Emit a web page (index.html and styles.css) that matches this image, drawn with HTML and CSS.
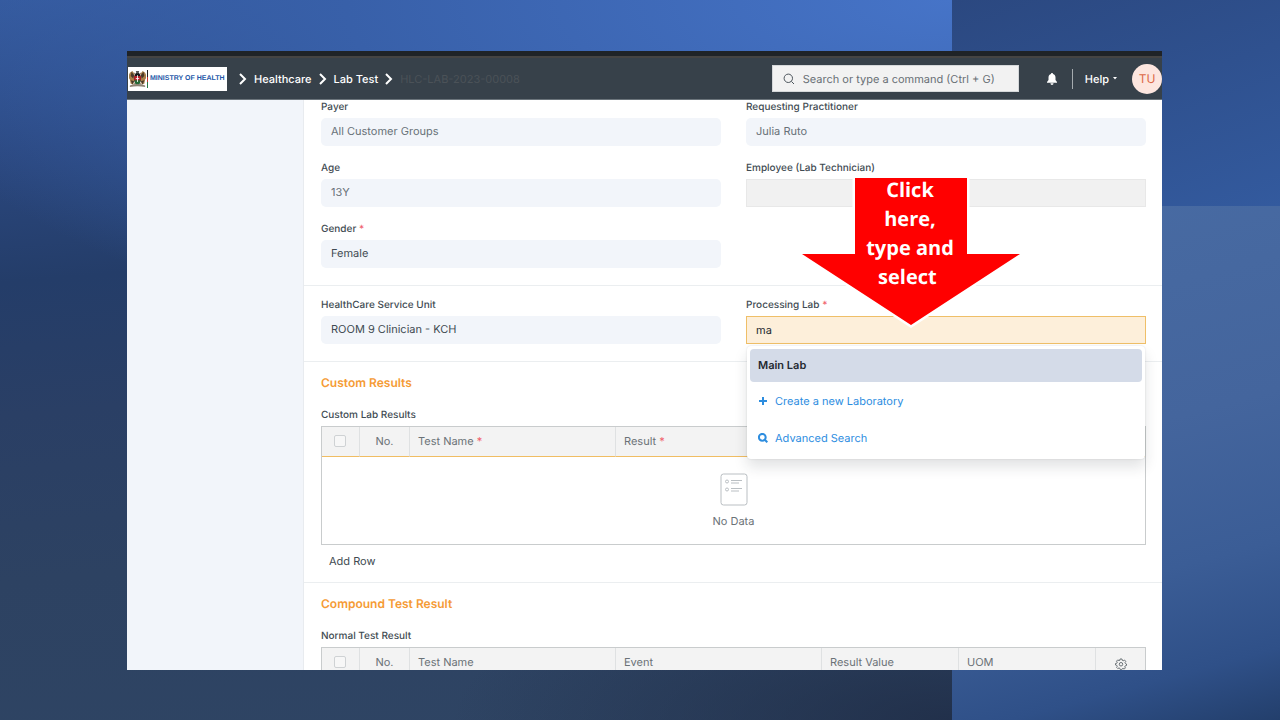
FILE: index.html
```
<!DOCTYPE html>
<html lang="en">
<head>
<meta charset="utf-8">
<title>Lab Test</title>
<link rel="stylesheet" href="styles.css">
</head>
<body>
<div class="slide">
  <div class="backdrop"><div class="tile-top"></div><div class="tile-bottom"></div></div>
  <div class="app">
    <div class="browser-edge"></div>
    <header class="navbar">
      <a class="brand" href="#">
        <svg class="crest" viewBox="2 2 20 21" aria-hidden="true">
          <path d="M3 5l3-2 2 3 1 5-2 8-3-1-1-5-2-3zM21 5l-3-2-2 3-1 5 2 8 3-1 1-5 2-3z" fill="#a8804a"/>
          <path d="M5 4l3 4-1 4-3-3zM19 4l-3 4 1 4 3-3zM4 14l4 1-2 4zM20 14l-4 1 2 4z" fill="#49382a"/>
          <path d="M8 5l8 14M16 5L8 19" stroke="#8b6a4c" stroke-width="1"/>
          <path d="M12 4c3 2 4 5 4 8s-1 6-4 8c-3-2-4-5-4-8s1-6 4-8z" fill="#171717"/>
          <path d="M8 9h8v6H8z" fill="#b3212a"/>
          <path d="M8 14h8l-2 5h-4z" fill="#256b37"/>
          <path d="M12 8v8M10 12h4" stroke="#fff" stroke-width="1"/>
          <path d="M10 3h4l-1 3h-2z" fill="#555"/>
          <path d="M3 20q9-3 18 0v2q-9-2-18 0z" fill="#8e8475"/>
        </svg>
        <span class="flag-rule"></span>
        <span class="brand-name">MINISTRY OF HEALTH</span>
      </a>
      <nav class="crumbs">
        <svg class="chev" viewBox="0 0 8 12"><path d="M1 1l5 5-5 5"/></svg>
        <a href="#">Healthcare</a>
        <svg class="chev" viewBox="0 0 8 12"><path d="M1 1l5 5-5 5"/></svg>
        <a href="#">Lab Test</a>
        <svg class="chev" viewBox="0 0 8 12"><path d="M1 1l5 5-5 5"/></svg>
        <a class="current" href="#">HLC-LAB-2023-00008</a>
      </nav>
      <label class="search">
        <svg viewBox="0 0 12 12" aria-hidden="true"><circle cx="5.3" cy="5.3" r="4.2"/><path d="M8.4 8.4l2.6 2.6"/></svg>
        <input type="text" aria-label="Search" placeholder="Search or type a command (Ctrl + G)">
      </label>
      <button class="bell" aria-label="Notifications"><svg viewBox="0 0 10 12"><path d="M5 0c.7 0 1 .4 1 1 1.700.4 2.500 1.900 2.500 3.500V7L10 9v.7H0V9l1.500-2V4.500C1.500 2.900 2.300 1.400 4 1c0-.6.3-1 1-1zM3.500 10.300h3C6.500 11.400 5.900 12 5 12s-1.500-.6-1.500-1.700z"/></svg></button>
      <button class="help">Help <svg viewBox="0 0 4 3"><path d="M0 0h4L2 2.500z"/></svg></button>
      <button class="avatar">TU</button>
    </header>
    <div class="body">
      <aside class="sidebar"></aside>
      <main class="form">
        <section class="section first">
          <div class="col">
            <div class="field"><label for="payer">Payer</label><input id="payer" class="muted" value="All Customer Groups" readonly></div>
            <div class="field"><label for="age">Age</label><input id="age" class="muted" value="13Y" readonly></div>
            <div class="field"><label for="gender">Gender <i>*</i></label><input id="gender" value="Female"></div>
          </div>
          <div class="col">
            <div class="field"><label for="prac">Requesting Practitioner</label><input id="prac" class="muted" value="Julia Ruto" readonly></div>
            <div class="field"><label for="emp">Employee (Lab Technician)</label><input id="emp" class="empty"></div>
          </div>
        </section>
        <section class="section">
          <div class="col">
            <div class="field"><label for="unit">HealthCare Service Unit</label><input id="unit" value="ROOM 9 Clinician - KCH"></div>
          </div>
          <div class="col">
            <div class="field picker"><label for="lab">Processing Lab <i>*</i></label><input id="lab" class="active" value="ma">
              <div class="menu">
                <button class="option selected">Main Lab</button>
                <button class="option"><svg class="plus" viewBox="0 0 10 10"><path d="M5 1v8M1 5h8"/></svg>Create a new Laboratory</button>
                <button class="option"><svg class="lens" viewBox="0 0 10 10"><circle cx="4.300" cy="4.300" r="3.400"/><path d="M6.800 6.800L9.300 9.300"/></svg>Advanced Search</button>
              </div>
            </div>
          </div>
        </section>
        <section class="block">
          <h2>Custom Results</h2>
          <h3>Custom Lab Results</h3>
          <table class="grid accent">
            <thead><tr><th class="check"><input type="checkbox" aria-label="Select all custom results"></th><th class="num">No.</th><th class="name">Test Name <i>*</i></th><th colspan="4">Result <i>*</i></th></tr></thead>
            <tbody><tr><td colspan="7">
              <svg class="doc" viewBox="0 0 28 33"><rect x="1" y="1" width="26" height="31" rx="2.500"/><circle cx="7" cy="8.500" r="1.500"/><circle cx="7" cy="16.500" r="1.500"/><path d="M11 7.500h11M11 10h8M11 15.500h11M11 18h8"/></svg>
              <div>No Data</div>
            </td></tr></tbody>
          </table>
          <button class="add">Add Row</button>
        </section>
        <section class="block">
          <h2>Compound Test Result</h2>
          <h3>Normal Test Result</h3>
          <table class="grid">
            <thead><tr><th class="check"><input type="checkbox" aria-label="Select all normal results"></th><th class="num">No.</th><th class="name">Test Name</th><th class="name">Event</th><th class="value">Result Value</th><th class="value">UOM</th><th class="gear"><svg viewBox="0 0 24 24"><path d="M10 2h4l.6 2.800 1.800.8 2.500-1.600 2.600 2.700-1.500 2.500.8 1.800L23 12v3l-2.700.8-.8 1.800 1.300 2.200-2.400 2.400-2.300-1.300-1.800.7L13.500 23h-3l-.8-2.400-1.800-.7-2.300 1.300-2.400-2.400 1.300-2.200-.8-1.800L1 14v-3l2.700-.6.8-1.800L3 6.300 5.600 3.700 8 5.400l1.600-.7z"/><circle cx="12" cy="12.500" r="3.500"/></svg></th></tr></thead>
          </table>
        </section>
      </main>
    </div>
    <div class="callout">
      <svg viewBox="0 0 228 154" aria-hidden="true"><path d="M58 3H170V79H223L114 150 5 79H58z" fill="#f00" stroke="#fff" stroke-width="5" paint-order="stroke"/></svg>
      <p>Click<br>here,<br>type and<br>select&nbsp;</p>
    </div>
  </div>
</div>
</body>
</html>
```
FILE: styles.css
```
* { box-sizing: border-box; }
body { margin: 0; font-family: Inter, "Liberation Sans", sans-serif; font-size: 11px; color: #414b52; text-rendering: geometricPrecision; }
button, input { font: inherit; color: inherit; text-rendering: inherit; }
button { border: 0; background: none; padding: 0; }
a { color: inherit; text-decoration: none; }
svg { display: block; fill: none; stroke: currentColor; }
i { color: #f0606c; font-style: normal; }

.slide { position: relative; height: 100vh; padding: 51px 118px 50px 127px; overflow: hidden; }
.backdrop {
  position: absolute; inset: 0; display: grid; grid-template-rows: 206px 1fr; padding-left: 952px;
  background:
    radial-gradient(ellipse 500px 160px at 952px 100%, rgba(32,46,72,.9), rgba(32,46,72,0)),
    radial-gradient(ellipse 1100px 400px at 952px 0, #4674c8 0%, #3860a9 55%, rgba(48,84,152,0) 100%),
    linear-gradient(175deg, #34599c 0%, #2b4880 18%, #243d69 34%, #2a3f65 50%, #2d4262 70%, #2f4564 100%);
}
.tile-top { background: linear-gradient(160deg, #2b4880, #335a9e); }
.tile-bottom { background: linear-gradient(165deg, #486ba3 0%, #44659d 45%, #3b5d96 70%, #2f5088 88%, #233f6c 100%); }

.app { position: relative; display: flex; flex-direction: column; height: 100%; background: #fff; }
.browser-edge { height: 7px; flex: none; background: #1f2327; border-bottom: 2px solid #454443; }
.navbar { display: flex; align-items: center; height: 42px; flex: none; padding: 0 0 0 1px; background: #37414a; color: #fff; border-bottom: 1px solid #6b747b; font-weight: 500; }
.brand { display: flex; align-items: center; width: 99px; height: 24px; padding: 0 1px; background: #fff; }
.crest { width: 17px; height: 18px; flex: none; stroke: none; }
.flag-rule { width: 1px; height: 18px; flex: none; margin: 0 2px 0 1px; background: linear-gradient(#222 40%, #c33 40% 65%, #287a46 65%); }
.brand-name { font: bold 7px "Liberation Sans", sans-serif; color: #2458a8; white-space: nowrap; }
.crumbs { display: flex; align-items: center; gap: 7px; margin-left: 12px; white-space: nowrap; }
.chev { width: 8px; height: 12px; stroke-width: 2; }
.crumbs .current { color: #4b5258; font-weight: 400; }
.search { display: flex; align-items: center; gap: 8px; width: 247px; height: 27px; margin-left: auto; padding: 0 10px; background: #f2f2f2; border: 1px solid #d5d8da; color: #4c555c; }
.search svg { width: 12px; height: 12px; flex: none; }
.search input { flex: 1; min-width: 0; border: 0; padding: 0; background: none; font-weight: 400; }
.search input::placeholder { color: #686f75; opacity: 1; }
.bell { margin-left: 28px; }
.bell svg { width: 10px; height: 12px; fill: #fff; stroke: none; }
.help { display: flex; align-items: center; gap: 4px; height: 20px; margin-left: 15px; padding-left: 12px; border-left: 1px solid #a5abaf; }
.help svg { width: 4px; height: 3px; fill: #fff; stroke: none; }
.avatar { width: 30px; height: 30px; margin-left: 15px; border-radius: 50%; background: #fde6df; color: #dc6846; font-size: 12px; font-weight: 400; }

.body { display: flex; flex: 1; min-height: 0; overflow: hidden; }
.sidebar { width: 177px; flex: none; background: #f2f5fa; border-right: 1px solid #e8ebef; }
.form { flex: 1; min-width: 0; }
.section { display: grid; grid-template-columns: 1fr 1fr; gap: 25px; height: 76px; padding: 11px 16px 0 17px; border-bottom: 1px solid #ebeef0; }
.section.first { height: 186px; padding-top: 0; }
.field { position: relative; height: 61px; }
.field label { display: block; height: 19px; line-height: 16px; font-size: 10px; font-weight: 500; }
.section.first .field label { height: 18px; line-height: 15px; }
.field input { display: block; width: 100%; height: 28px; padding: 0 9px 2px; border: 1px solid transparent; border-radius: 5px; background: #f2f5fa; outline: 0; }
.field .muted { color: #687178; }
.field .empty { background: #f1f1f1; border-color: #e8e8e8; border-radius: 0; }
.field .active { padding-bottom: 0; background: #fdefda; border-color: #efbf68; border-radius: 0; color: #252b30; }
.menu { position: absolute; z-index: 2; top: 49px; left: 1px; right: 1px; height: 113px; padding: 3px 3px; background: #fff; border-radius: 4px; box-shadow: 0 0 2px rgba(30,40,50,.15), 0 8px 14px rgba(30,40,50,.13); }
.option { display: flex; align-items: center; gap: 7px; width: 100%; height: 37px; padding: 0 8px 2px; border-radius: 4px; color: #2d8ddf; text-align: left; }
.option.selected { height: 33px; margin-bottom: 1px; background: #d4dbe8; color: #242a31; font-weight: 600; }
.option svg { width: 10px; height: 10px; stroke-width: 2; }

.block { padding: 13px 16px 0 17px; height: 221px; border-bottom: 1px solid #ebeef0; }
h2 { margin: 0; font-size: 12px; line-height: 16px; font-weight: 600; color: #f59b35; }
h3 { margin: 17px 0 4px; font-size: 10px; line-height: 14px; font-weight: 500; }
.grid { width: 100%; table-layout: fixed; border-collapse: separate; border-spacing: 0; border: 1px solid #c9cccd; color: #6b7277; }
.grid th { height: 29px; padding: 0 8px 2px; background: #f3f3f3; border-right: 1px solid #dfe1e2; text-align: left; font-weight: 400; }
.grid th:last-child { border-right: 0; }
.grid.accent th { height: 30px; border-bottom: 1px solid #f0bd63; }
.grid .check { width: 38px; padding: 0 12px 2px; }
.grid .num { width: 50px; text-align: center; padding: 0 0 2px; }
.grid .name { width: 206px; }
.grid .value { width: 137px; }
.grid .gear { padding: 0 19px; }
.gear svg { width: 12px; height: 12px; stroke-width: 2; margin-top: 2px; }
.grid input { appearance: none; display: block; width: 12px; height: 12px; margin: 0; border: 1px solid #cfd2d4; border-radius: 2px; background: #f7f7f7; }
.grid td { height: 87px; padding: 0; text-align: center; }
.doc { width: 28px; height: 33px; margin: 0 auto 8px; color: #babfc3; }
.add { display: block; margin: 9px 8px 0; }

.callout { position: absolute; z-index: 3; top: 124px; left: 670px; width: 228px; }
.callout svg { width: 228px; height: 154px; stroke: none; }
.callout p { position: absolute; inset: 0; margin: 0; padding-right: 2px; text-align: center; color: #fff; font: bold 20px/29px "Open Sans", "Noto Sans", sans-serif; }
```
